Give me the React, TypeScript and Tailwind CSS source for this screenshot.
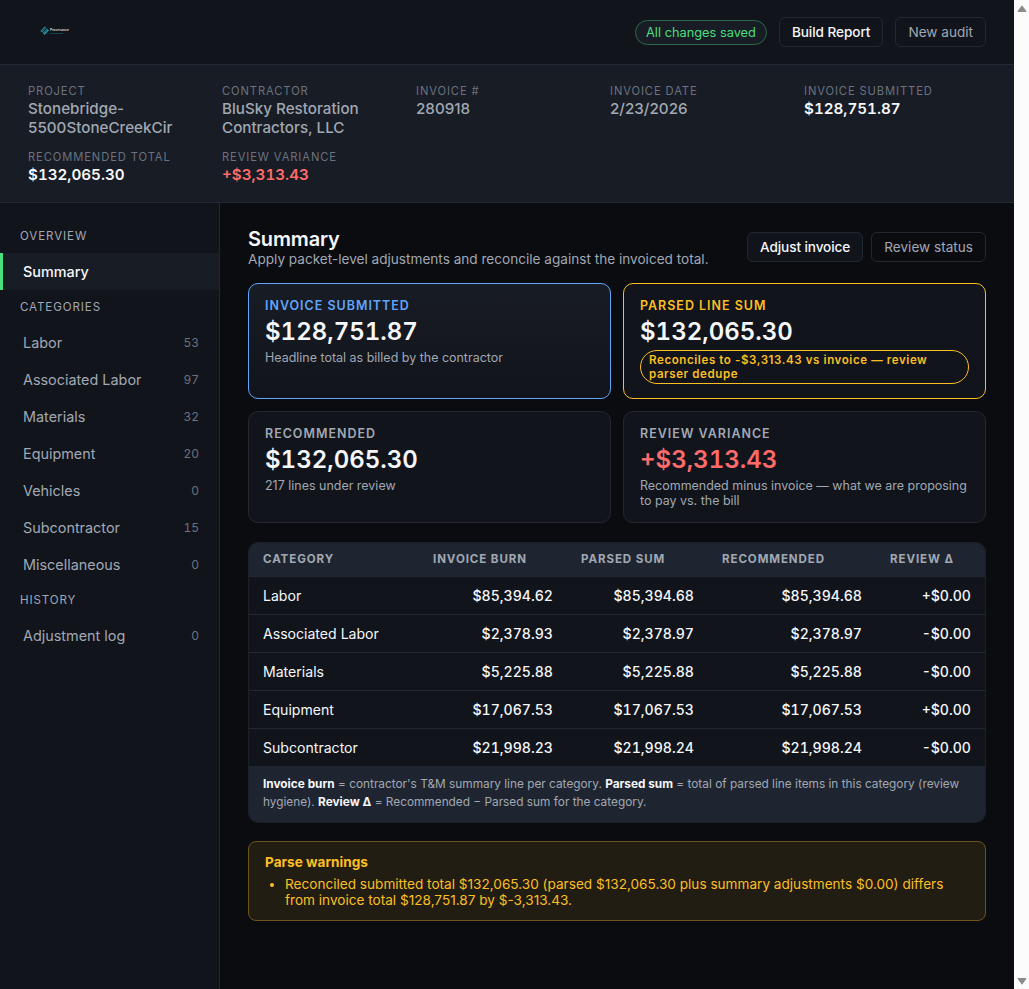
import type { ReactNode } from "react";

const META = [
  { label: "Project", value: "Stonebridge-5500StoneCreekCir", tone: "text-[#a1a8b3] font-medium" },
  { label: "Contractor", value: "BluSky Restoration Contractors, LLC", tone: "text-[#a1a8b3] font-medium" },
  { label: "Invoice #", value: "280918", tone: "text-[#a1a8b3] font-medium" },
  { label: "Invoice date", value: "2/23/2026", tone: "text-[#a1a8b3] font-medium" },
  { label: "Invoice submitted", value: "$128,751.87", tone: "text-[#f5f7fa] font-semibold tabular-nums" },
  { label: "Recommended total", value: "$132,065.30", tone: "text-[#f5f7fa] font-semibold tabular-nums" },
  { label: "Review variance", value: "+$3,313.43", tone: "text-[#ff6b6b] font-semibold tabular-nums" },
];

const CATEGORIES: [string, number][] = [
  ["Labor", 53],
  ["Associated Labor", 97],
  ["Materials", 32],
  ["Equipment", 20],
  ["Vehicles", 0],
  ["Subcontractor", 15],
  ["Miscellaneous", 0],
];

const COLUMNS = ["Category", "Invoice burn", "Parsed sum", "Recommended", "Review Δ"];

const ROWS = [
  ["Labor", "$85,394.62", "$85,394.68", "$85,394.68", "+$0.00"],
  ["Associated Labor", "$2,378.93", "$2,378.97", "$2,378.97", "-$0.00"],
  ["Materials", "$5,225.88", "$5,225.88", "$5,225.88", "-$0.00"],
  ["Equipment", "$17,067.53", "$17,067.53", "$17,067.53", "+$0.00"],
  ["Subcontractor", "$21,998.23", "$21,998.24", "$21,998.24", "-$0.00"],
];

function Logo() {
  return (
    <div className="ml-3 flex h-3 items-center">
      <svg width="10" height="11" viewBox="0 0 10 11" fill="none">
        <path d="M0.4 5.9 4.8 1.3 6.4 2.8 2.1 7.4Z" fill="#1f7f90" />
        <path d="M2.6 8 7 3.5 9 5.6 4.7 10.1Z" fill="#2292a2" />
        <path d="M2.3 6 5.8 2.4M3.9 8.2 7.4 4.6M3.2 3.7 6.7 7.4" stroke="#11141b" strokeWidth="0.4" />
      </svg>
      <div className="flex flex-col gap-px">
        <span className="text-[3.3px] leading-[4px] font-semibold text-[#d5d9df]">Provenance</span>
        <span className="h-px w-[13px] bg-[#174452]" />
      </div>
    </div>
  );
}

function Button({ children, tone }: { children: ReactNode; tone: string }) {
  return (
    <button
      className={`h-[30px] rounded-md border border-[#232833] px-3 text-[13.6px] leading-4 whitespace-nowrap ${tone}`}
    >
      {children}
    </button>
  );
}

function SideLabel({ children }: { children: ReactNode }) {
  return (
    <div className="flex h-[34px] items-center px-5 pt-[2px] text-[11.52px] tracking-[0.08em] text-[#a1a8b3] uppercase">
      {children}
    </div>
  );
}

function SideItem({ label, count, active }: { label: string; count?: number; active?: boolean }) {
  return (
    <div
      className={`flex h-[37px] items-center justify-between border-l-[3px] px-5 text-[14.4px] ${
        active ? "border-[#4ade80] bg-[#181c24] font-medium text-[#f5f7fa]" : "border-transparent text-[#a1a8b3]"
      }`}
    >
      <span>{label}</span>
      {count !== undefined && <span className="text-xs tabular-nums text-[#6b7280]">{count}</span>}
    </div>
  );
}

function Card({
  label,
  value,
  children,
  frame,
  labelTone,
  valueTone,
}: {
  label: string;
  value: string;
  children: ReactNode;
  frame: string;
  labelTone: string;
  valueTone: string;
}) {
  return (
    <section className={`rounded-[10px] border px-4 pt-[14px] ${frame}`}>
      <h2 className={`text-[12.48px] leading-4 font-semibold tracking-[0.08em] uppercase ${labelTone}`}>{label}</h2>
      <div className={`mt-[2px] text-2xl leading-[31px] font-semibold tabular-nums ${valueTone}`}>{value}</div>
      {children}
    </section>
  );
}

function Scrollbar() {
  return (
    <div className="flex w-[15px] shrink-0 flex-col items-center justify-between bg-[#fcfcfc] pt-[5px] pb-1">
      <svg width="10" height="8" viewBox="0 0 10 8">
        <path d="M5 0.2 9.3 6Q9.5 7 8.6 7H1.4Q0.5 7 0.7 6Z" fill="#8b8b8b" />
      </svg>
      <svg width="10" height="8" viewBox="0 0 10 8">
        <path d="M5 7.8 9.3 2Q9.5 1 8.6 1H1.4Q0.5 1 0.7 2Z" fill="#8b8b8b" />
      </svg>
    </div>
  );
}

const COLS = "grid grid-cols-[170px_148px_141px_168px_109px]";
const NOTE = "mt-[3px] text-[12.48px] leading-[15px] text-[#a1a8b3]";
const TERM = "font-bold text-[#f5f7fa]";

export default function App() {
  return (
    <div className="flex h-[989px] w-[1029px] overflow-hidden bg-[#0a0c10] font-['Inter',sans-serif] text-[#f5f7fa]">
      <div className="flex min-w-0 flex-1 flex-col">
        <header className="flex h-[65px] shrink-0 items-center justify-between border-b border-[#232833] bg-[#11141b] px-7">
          <div className="pb-[3px]">
            <Logo />
          </div>
          <div className="flex items-center gap-3">
            <span className="flex h-[25px] items-center rounded-full border border-[#2a6b48] bg-[#181c24] px-[10px] pt-px text-[12.8px] text-[#4ade80]">
              All changes saved
            </span>
            <Button tone="font-medium tracking-[-0.07px] text-[#f5f7fa]">Build Report</Button>
            <Button tone="text-[#a1a8b3]">New audit</Button>
          </div>
        </header>

        <dl className="grid h-[138px] shrink-0 grid-cols-5 content-start gap-3 border-b border-[#232833] bg-[#181c24] px-7 py-[18px]">
          {META.map((m) => (
            <div key={m.label}>
              <dt className="text-[11.2px] leading-4 tracking-[0.08em] text-[#6b7280] uppercase">{m.label}</dt>
              <dd className={`text-[15.2px] leading-[19px] ${m.tone}`}>{m.value}</dd>
            </div>
          ))}
        </dl>

        <div className="flex min-h-0 flex-1">
          <nav className="w-[220px] shrink-0 border-r border-[#232833] bg-[#11141b] pt-4">
            <SideLabel>Overview</SideLabel>
            <SideItem label="Summary" active />
            <SideLabel>Categories</SideLabel>
            {CATEGORIES.map(([label, count]) => (
              <SideItem key={label} label={label} count={count} />
            ))}
            <SideLabel>History</SideLabel>
            <SideItem label="Adjustment log" count={0} />
          </nav>

          <main className="flex-1 px-7 pt-6">
            <div className="flex h-[56px] items-start justify-between">
              <div>
                <h1 className="text-xl leading-6 font-semibold tracking-[-0.15px]">Summary</h1>
                <p className="text-[13.6px] leading-4 text-[#a1a8b3]">
                  Apply packet-level adjustments and reconcile against the invoiced total.
                </p>
              </div>
              <div className="flex gap-2 pt-[5px]">
                <Button tone="bg-[#11141b] font-medium tracking-[-0.09px] text-[#f5f7fa]">Adjust invoice</Button>
                <Button tone="text-[#a1a8b3]">Review status</Button>
              </div>
            </div>

            <div className="grid grid-cols-2 grid-rows-[116px_112px] gap-3">
              <Card
                label="Invoice submitted"
                value="$128,751.87"
                frame="border-[#60a5fa] bg-linear-to-b from-[#181c24] to-[#11141b]"
                labelTone="text-[#60a5fa]"
                valueTone="text-[#f5f7fa]"
              >
                <p className={NOTE}>Headline total as billed by the contractor</p>
              </Card>
              <Card
                label="Parsed line sum"
                value="$132,065.30"
                frame="border-[#fbbf24] bg-[#11141b]"
                labelTone="text-[#fbbf24]"
                valueTone="text-[#f5f7fa]"
              >
                <div className="mt-[3px] rounded-full border border-[#fbbf24] px-2 py-[2px] text-[11.52px] leading-[14px] font-semibold tracking-[0.6px] text-[#fbbf24]">
                  Reconciles to -$3,313.43 vs invoice — review parser dedupe
                </div>
              </Card>
              <Card
                label="Recommended"
                value="$132,065.30"
                frame="border-[#232833] bg-[#11141b]"
                labelTone="text-[#a1a8b3]"
                valueTone="text-[#f5f7fa]"
              >
                <p className={NOTE}>217 lines under review</p>
              </Card>
              <Card
                label="Review variance"
                value="+$3,313.43"
                frame="border-[#232833] bg-[#11141b]"
                labelTone="text-[#a1a8b3]"
                valueTone="text-[#ff6b6b]"
              >
                <p className={NOTE}>Recommended minus invoice — what we are proposing to pay vs. the bill</p>
              </Card>
            </div>

            <div className="mt-[19px] overflow-hidden rounded-[10px] border border-[#1b2029] bg-[#11141b]">
              <div className={`${COLS} h-[34px] items-center border-b border-[#232833] bg-[#1f2530] pt-px`}>
                {COLUMNS.map((c) => (
                  <div key={c} className="px-[14px] text-[11.52px] font-bold tracking-[0.08em] text-[#a1a8b3] uppercase">
                    {c}
                  </div>
                ))}
              </div>
              {ROWS.map((row) => (
                <div
                  key={row[0]}
                  className={`${COLS} h-[38px] items-center border-b border-[#232833] text-[14.08px] nth-[6]:h-[37px] nth-[6]:border-b-0`}
                >
                  {row.map((cell, i) => (
                    <div key={i} className={i === 0 ? "px-[14px]" : "px-[14px] text-right font-medium tabular-nums"}>
                      {cell}
                    </div>
                  ))}
                </div>
              ))}
              <p className="h-[56px] bg-[#1f2530] px-[14px] pt-[9px] text-[11.84px] leading-[18px] text-[#a1a8b3]">
                <strong className={TERM}>Invoice burn</strong> = contractor's T&amp;M summary line per category.{" "}
                <strong className={TERM}>Parsed sum</strong> = total of parsed line items in this category (review
                hygiene). <strong className={TERM}>Review Δ</strong> = Recommended − Parsed sum for the category.
              </p>
            </div>

            <div className="mt-[18px] h-[80px] rounded-lg border border-[#6c541a] bg-[#221d13] px-4 pt-[11px] text-[13.6px] text-[#fbbf24]">
              <h3 className="leading-[18px] font-bold">Parse warnings</h3>
              <ul className="mt-[5px] list-disc pl-5 leading-4">
                <li>
                  Reconciled submitted total $132,065.30 (parsed $132,065.30 plus summary adjustments $0.00) differs from
                  invoice total $128,751.87 by $-3,313.43.
                </li>
              </ul>
            </div>
          </main>
        </div>
      </div>
      <Scrollbar />
    </div>
  );
}
